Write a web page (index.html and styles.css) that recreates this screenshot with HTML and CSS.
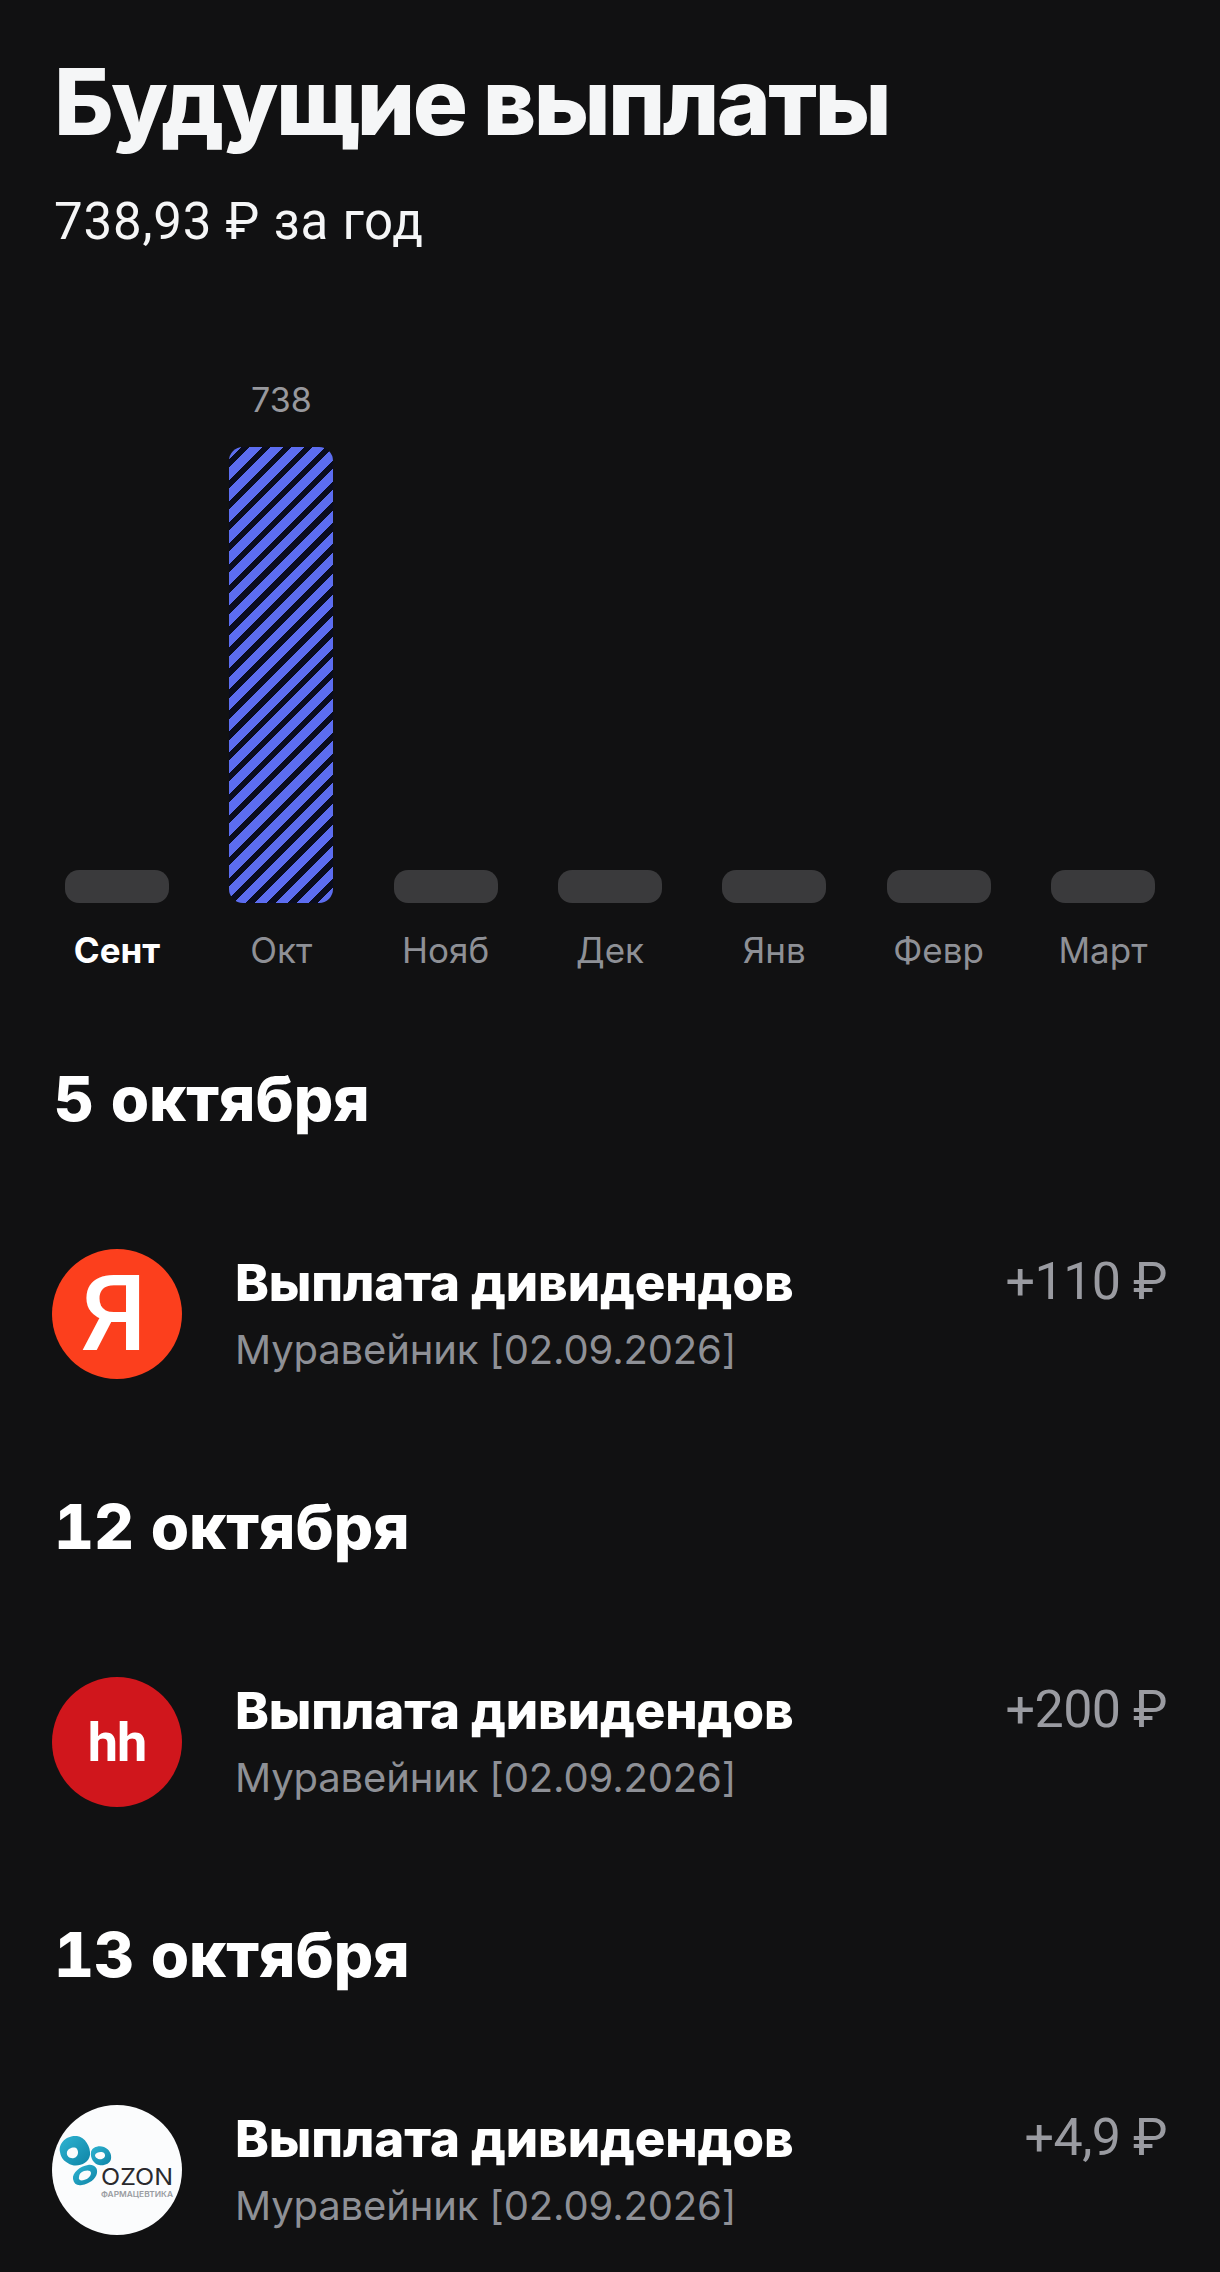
FILE: index.html

```html
<!DOCTYPE html>
<html lang="ru">
<head>
  <meta charset="UTF-8" />
  <title>Будущие выплаты</title>
  <link rel="stylesheet" href="styles.css">
</head>
<body>
  <div class="page">
    <h1 class="title">Будущие выплаты</h1>
    <div class="total">738,93 ₽ за год</div>

    <div class="chart">
      <div class="col">
        <div class="bar empty"></div>
        <div class="month active">Сент</div>
      </div>
      <div class="col">
        <div class="bar-value">738</div>
        <div class="bar striped"></div>
        <div class="month">Окт</div>
      </div>
      <div class="col">
        <div class="bar empty"></div>
        <div class="month">Нояб</div>
      </div>
      <div class="col">
        <div class="bar empty"></div>
        <div class="month">Дек</div>
      </div>
      <div class="col">
        <div class="bar empty"></div>
        <div class="month">Янв</div>
      </div>
      <div class="col">
        <div class="bar empty"></div>
        <div class="month">Февр</div>
      </div>
      <div class="col">
        <div class="bar empty"></div>
        <div class="month">Март</div>
      </div>
    </div>

    <section class="day">
      <h2 class="day-title">5 октября</h2>
      <div class="payment">
        <div class="logo logo-ya">Я</div>
        <div class="info">
          <div class="pay-title">Выплата дивидендов</div>
          <div class="pay-sub">Муравейник [02.09.2026]</div>
        </div>
        <div class="amount">+110 ₽</div>
      </div>
    </section>

    <section class="day">
      <h2 class="day-title">12 октября</h2>
      <div class="payment">
        <div class="logo logo-hh">hh</div>
        <div class="info">
          <div class="pay-title">Выплата дивидендов</div>
          <div class="pay-sub">Муравейник [02.09.2026]</div>
        </div>
        <div class="amount">+200 ₽</div>
      </div>
    </section>

    <section class="day">
      <h2 class="day-title">13 октября</h2>
      <div class="payment">
        <div class="logo logo-ozon">
          <svg width="130" height="130" viewBox="0 0 130 130">
            <defs>
              <linearGradient id="drop" x1="0" y1="0" x2="1" y2="1">
                <stop offset="0" stop-color="#2fb4d2"/>
                <stop offset="1" stop-color="#0e84a6"/>
              </linearGradient>
            </defs>
            <path fill="url(#drop)" fill-rule="evenodd" d="M8 47C6 37 16 30 25 31 33 32 39 42 38 50 37 58 27 62 20 60 14 58 9 54 8 47ZM15 47C14 51 18 54 22 53 26 52 27 47 25 44 23 41 16 43 15 47Z"/>
            <path fill="url(#drop)" fill-rule="evenodd" d="M39 47C40 42 47 40 52 42 57 44 60 49 59 54 58 59 52 61 47 60 42 59 38 53 39 47ZM43 50C43 53 47 55 50 54 53 53 54 50 52 48 50 46 44 47 43 50Z"/>
            <path fill="url(#drop)" fill-rule="evenodd" d="M21 74C20 68 28 61 36 60 42 59 46 63 45 68 44 74 37 79 30 80 25 81 22 79 21 74ZM27 72C26 75 29 76 32 75 36 74 39 71 39 68 39 65 35 65 32 66 29 67 27 69 27 72Z"/>
            <text class="ozon-word" x="49" y="80" textLength="72" lengthAdjust="spacingAndGlyphs">OZON</text>
            <text class="ozon-sub" x="49" y="92" textLength="72" lengthAdjust="spacingAndGlyphs">ФАРМАЦЕВТИКА</text>
          </svg>
        </div>
        <div class="info">
          <div class="pay-title">Выплата дивидендов</div>
          <div class="pay-sub">Муравейник [02.09.2026]</div>
        </div>
        <div class="amount">+4,9 ₽</div>
      </div>
    </section>
  </div>
</body>
</html>
```

FILE: styles.css

```css
* { box-sizing: border-box; }
html, body { margin: 0; background: #111112; }
body { font-family: Inter, "Noto Sans", sans-serif; color: #fff; }

.page { height: 2272px; overflow: hidden; padding: 52px 53px 0 52px; }

.title { margin: 0 0 0 2px; font-size: 92px; line-height: 100px; font-weight: 800; color: #f5f6f7; letter-spacing: -2.6px; }
.total { margin: 40px 0 0 2px; font-family: Roboto, sans-serif; font-size: 51px; line-height: 60px; color: #f5f6f7; letter-spacing: .8px; }

.chart { display: flex; justify-content: space-between; align-items: flex-end; height: 720px; padding: 0 12px 0 13px; }
.col { width: 104px; display: flex; flex-direction: column; align-items: center; }
.bar { width: 104px; border-radius: 14px; }
.bar.empty { height: 33px; background: #3a3a3c; }
.bar.striped { height: 456px; background: repeating-linear-gradient(135deg, #5c6df0 0 8.8px, #0a0c1e 8.8px 14.8px); }
.bar-value { font-size: 34px; line-height: 40px; margin-bottom: 27px; color: #97989d; }
.month { margin-top: 25px; font-size: 35px; line-height: 44px; color: #8e9096; white-space: nowrap; }
.month.active { color: #fff; font-weight: 700; }

.day { margin-top: 91px; }
.day + .day { margin-top: 112px; }
.day-title { margin: 0 0 0 2px; font-size: 62px; line-height: 72px; font-weight: 800; font-feature-settings: "tnum"; }

.payment { display: flex; align-items: flex-start; margin-top: 114px; }
.logo { width: 130px; height: 130px; border-radius: 50%; flex: none; display: flex; align-items: center; justify-content: center; color: #fff; overflow: hidden; }
.logo-ya { background: #fc3f1d; font-family: Roboto, sans-serif; font-size: 106px; font-weight: 500; padding-right: 6px; }
.logo-hh { background: #d0161c; font-family: Roboto, sans-serif; font-size: 54px; font-weight: 700; letter-spacing: -1px; }
.logo-ozon { background: #fbfcfd; }
.ozon-word { font-size: 23px; fill: #2a2a2e; }
.ozon-sub { font-size: 8px; font-weight: 600; fill: #9a9ca2; }

.info { flex: 1; margin-left: 53px; }
.pay-title { font-size: 51px; line-height: 60px; font-weight: 800; margin-top: 4px; letter-spacing: -.1px; }
.pay-sub { font-size: 40px; line-height: 52px; margin-top: 11px; color: #8e9096; letter-spacing: -.15px; }
.amount { font-family: Roboto, sans-serif; font-size: 52px; line-height: 60px; margin-top: 3px; color: #9a9ba1; letter-spacing: -.5px; }
```
